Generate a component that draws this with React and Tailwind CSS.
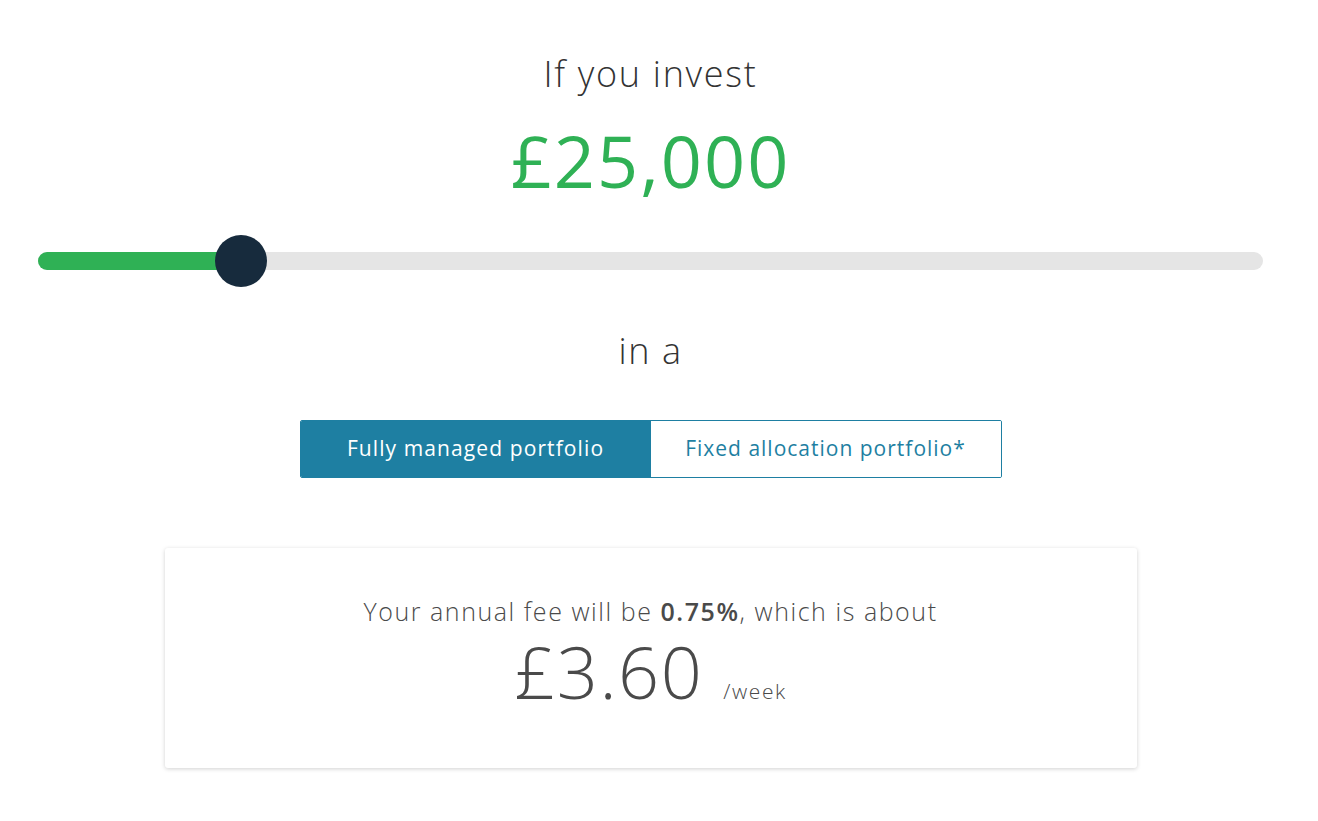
export default function App() {
  const pct = (241 - 38) / (1263 - 38);
  return (
    <div className="min-h-screen bg-white" style={{ fontFamily: '"Open Sans", "Liberation Sans", sans-serif' }}>
      <div className="w-[1301px] px-[38px] flex flex-col items-center">
        <div className="mt-[50px] h-[48px] flex items-center text-[36px] font-light text-[#333333] tracking-[1.7px]">If you invest</div>
        <div className="mt-[22px] h-[80px] flex items-center text-[72px] font-normal text-[#2fb155] leading-none tracking-[2px]">£25,000</div>
        <div className="mt-[35px] w-full h-[52px] relative flex items-center">
          <div className="w-full h-[18px] rounded-full bg-[#e5e5e5] overflow-hidden">
            <div className="h-full bg-[#2fb155]" style={{ width: `${pct * 100}%` }} />
          </div>
          <div className="absolute top-0 w-[52px] h-[52px] rounded-full bg-[#172b3d]" style={{ left: `calc(${pct * 100}% - 26px)` }} />
        </div>
        <div className="mt-[42px] h-[44px] flex items-center text-[36px] font-light text-[#333333] tracking-[1.6px]">in a</div>
        <div className="mt-[47px] flex w-[702px] h-[58px] rounded-[2px] border border-[#1e7fa2] overflow-hidden">
          <div className="flex-1 bg-[#1e7fa2] text-white flex items-center justify-center text-[21px] font-medium tracking-[1.1px]">Fully managed portfolio</div>
          <div className="flex-1 bg-white text-[#1e7fa2] flex items-center justify-center text-[21px] tracking-[1px]">Fixed allocation portfolio*</div>
        </div>
        <div className="mt-[70px] w-[972px] h-[220px] rounded-[3px] bg-white shadow-[0_1px_4px_rgba(0,0,0,0.18)] flex flex-col items-center">
          <div className="mt-[45px] text-[25px] text-[#4a4a4a] font-light tracking-[1.55px]">
            Your annual fee will be <span className="font-semibold">0.75%</span>, which is about
          </div>
          <div className="mt-[4px] flex items-baseline">
            <span className="text-[72px] font-light text-[#4a4a4a] leading-none tracking-[1.5px]">£3.60</span>
            <span className="ml-[20px] text-[21px] font-light text-[#4a4a4a] tracking-[1.6px]">/week</span>
          </div>
        </div>
      </div>
    </div>
  );
}
